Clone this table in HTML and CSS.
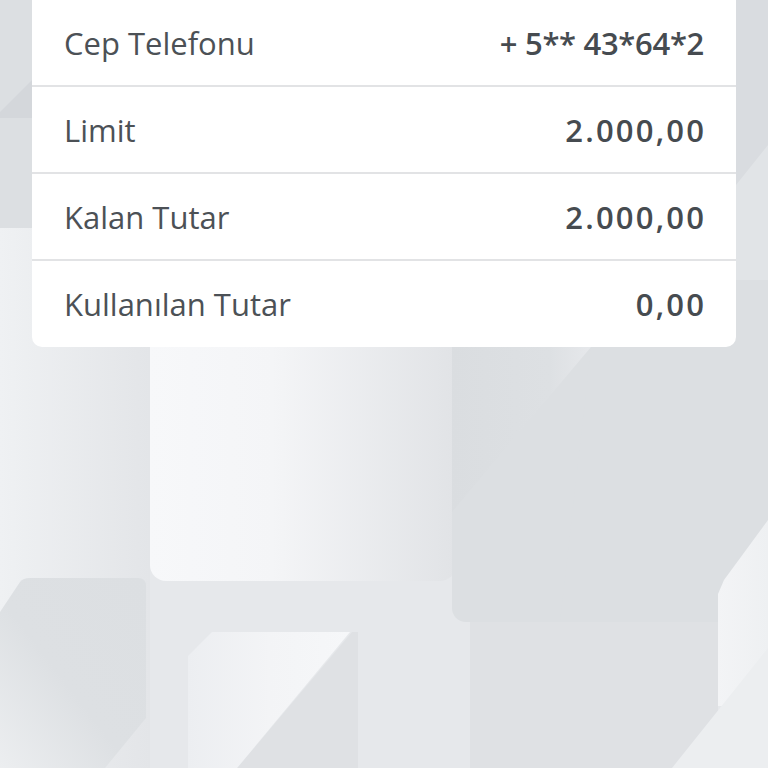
FILE: index.html
```html
<!DOCTYPE html>
<html lang="tr">
<head>
<meta charset="utf-8">
<title>Hesap Bilgileri</title>
<link rel="stylesheet" href="styles.css">
</head>
<body>
<svg class="backdrop" width="768" height="768" viewBox="0 0 768 768" aria-hidden="true">
  <defs>
    <linearGradient id="gLeft" x1="0" y1="0" x2="1" y2="0">
      <stop offset="0" stop-color="#eff1f3"/>
      <stop offset="1" stop-color="#e3e5e8"/>
    </linearGradient>
    <linearGradient id="gLight" x1="0" y1="0" x2="1" y2="0">
      <stop offset="0" stop-color="#f7f8fa"/>
      <stop offset="0.4" stop-color="#f4f5f7"/>
      <stop offset="1" stop-color="#e1e3e6"/>
    </linearGradient>
    <linearGradient id="gS1" x1="1" y1="0" x2="0" y2="1">
      <stop offset="0" stop-color="#dcdfe2"/>
      <stop offset="0.55" stop-color="#dde0e3"/>
      <stop offset="1" stop-color="#eceef0"/>
    </linearGradient>
    <linearGradient id="gS3" x1="0" y1="0" x2="1" y2="0">
      <stop offset="0" stop-color="#eceef1"/>
      <stop offset="0.5" stop-color="#f3f4f6"/>
      <stop offset="1" stop-color="#f6f7f9"/>
    </linearGradient>
    <linearGradient id="gStreak" x1="0" y1="0" x2="1" y2="0">
      <stop offset="0" stop-color="#dadde0"/>
      <stop offset="0.7" stop-color="#dde0e3"/>
      <stop offset="1" stop-color="#e6e8eb"/>
    </linearGradient>
    <linearGradient id="gS4" x1="0" y1="0" x2="1" y2="0">
      <stop offset="0" stop-color="#f3f4f6"/>
      <stop offset="1" stop-color="#eef0f2"/>
    </linearGradient>
  </defs>
  <rect x="0" y="0" width="768" height="768" fill="#e6e8eb"/>
  <rect x="0" y="0" width="60" height="228" fill="#dcdfe2"/>
  <polygon points="0,112 32,80 40,80 40,118 0,118" fill="#d4d7db"/>
  <rect x="0" y="228" width="150" height="540" fill="url(#gLeft)"/>
  <rect x="700" y="0" width="68" height="347" fill="#e1e4e7"/>
  <polygon points="700,0 768,0 768,145 736,185 700,185" fill="#d9dce0"/>
  <rect x="150" y="280" width="306" height="301" rx="16" fill="url(#gLight)"/>
  <rect x="452" y="280" width="330" height="342" rx="14" fill="#dcdfe2"/>
  <polygon points="452,347 591,347 452,512" fill="url(#gStreak)"/>
  <polygon points="591,347 768,347 768,520 724,580 718,592 718,706 672,768 470,768 470,622 560,622" fill="#dcdfe2"/>
  <rect x="470" y="622" width="248" height="146" fill="#dfe1e4"/>
  <polygon points="352,632 358,632 358,768 237,768" fill="#dfe1e4"/>
  <polygon points="188,656 212,632 350,632 237,768 188,768" fill="url(#gS3)"/>
  <path d="M0,612 L20,582 Q23,578 30,578 L138,578 Q146,578 146,586 L146,718 L105,768 L0,768 Z" fill="url(#gS1)"/>
  <polygon points="718,594 724,580 768,520 768,706 718,706" fill="url(#gS4)"/>
  <polygon points="672,768 768,648 768,768" fill="#eceef0"/>
</svg>

<main class="card">
  <div class="row">
    <span class="label">Cep Telefonu</span>
    <span class="value">+ 5** 43*64*2</span>
  </div>
  <div class="row">
    <span class="label">Limit</span>
    <span class="value value--amount">2.000,00</span>
  </div>
  <div class="row">
    <span class="label">Kalan Tutar</span>
    <span class="value value--amount">2.000,00</span>
  </div>
  <div class="row">
    <span class="label">Kullanılan Tutar</span>
    <span class="value value--amount">0,00</span>
  </div>
</main>
</body>
</html>
```
FILE: styles.css
```css
html, body {
  margin: 0;
  padding: 0;
  width: 768px;
  height: 768px;
  overflow: hidden;
  background: #e6e8eb;
  font-family: "Open Sans", "Noto Sans", sans-serif;
}

body {
  position: relative;
}

.backdrop {
  position: absolute;
  left: 0;
  top: 0;
  z-index: 0;
  display: block;
}

.card {
  position: relative;
  z-index: 1;
  margin: 0 32px;
  background: #ffffff;
  border-radius: 0 0 10px 10px;
  display: flex;
  flex-direction: column;
}

.row {
  box-sizing: border-box;
  height: 87px;
  padding: 0 32px;
  display: flex;
  align-items: center;
  justify-content: space-between;
  border-bottom: 2px solid #e2e3e5;
}

.row:last-child {
  border-bottom: none;
  height: 86px;
}

.label {
  font-size: 31px;
  font-weight: 400;
  color: #4c5156;
}

.value {
  font-size: 31px;
  font-weight: 600;
  color: #464b50;
  letter-spacing: -0.3px;
}

.value--amount {
  letter-spacing: 2.2px;
  margin-right: -2.2px;
}
```
